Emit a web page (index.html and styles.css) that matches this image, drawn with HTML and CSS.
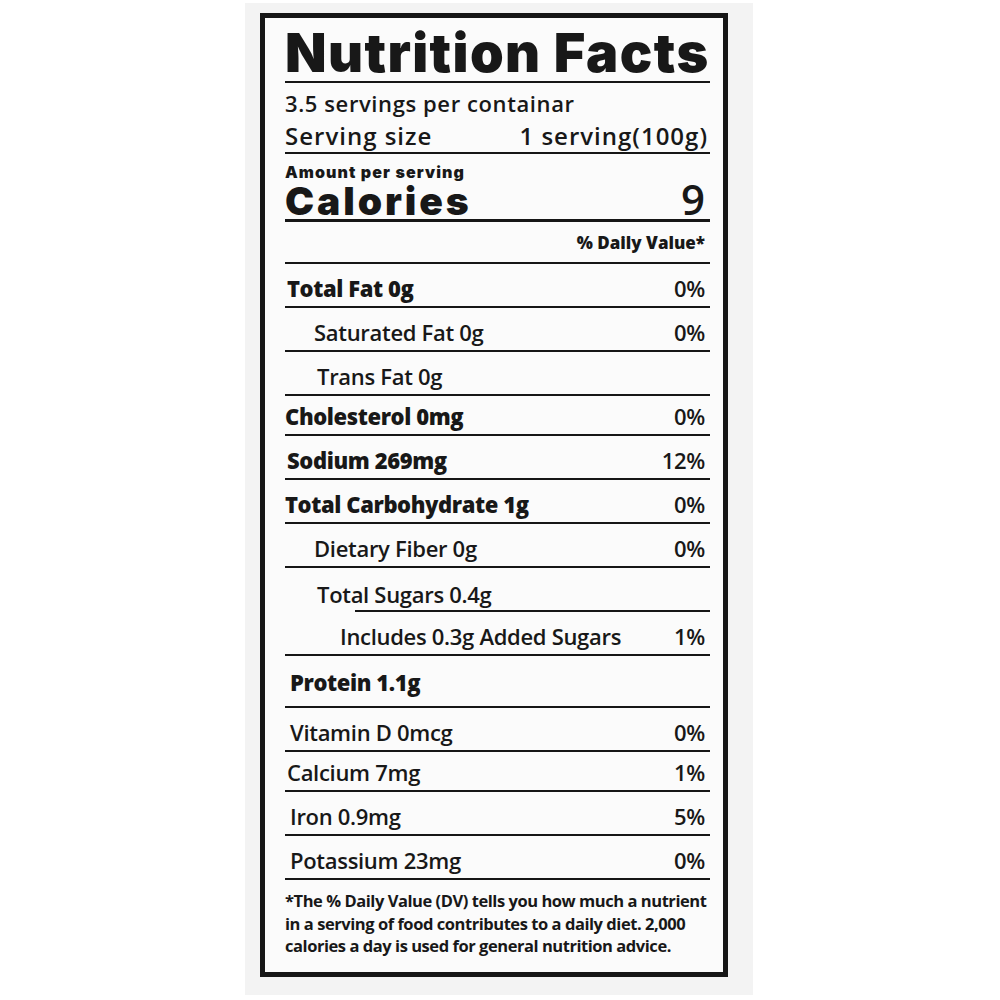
FILE: index.html
```html
<!DOCTYPE html>
<html lang="en">
<head>
<meta charset="utf-8">
<title>Nutrition Facts</title>
<link rel="stylesheet" href="styles.css">
</head>
<body>
<div class="sheet">
  <section class="label">
    <h1 class="title">Nutrition Facts</h1>
    <div class="servings">
      <div class="per-container">3.5 servings per containar</div>
      <div class="serving-size"><span>Serving size</span><span>1 serving(100g)</span></div>
    </div>
    <div class="calories-block">
      <div class="amount">Amount per serving</div>
      <div class="calories-row"><span class="cal-label">Calories</span><span class="cal-value">9</span></div>
    </div>
    <div class="dv-head">% Daily Value*</div>

    <div class="row bold main"><span>Total Fat 0g</span><span class="pct">0%</span></div>
    <div class="row indent"><span>Saturated Fat 0g</span><span class="pct">0%</span></div>
    <div class="row indent wide"><span>Trans Fat 0g</span></div>
    <div class="row bold short"><span>Cholesterol 0mg</span><span class="pct">0%</span></div>
    <div class="row bold main"><span>Sodium 269mg</span><span class="pct">12%</span></div>
    <div class="row bold"><span>Total Carbohydrate 1g</span><span class="pct">0%</span></div>
    <div class="row indent"><span>Dietary Fiber 0g</span><span class="pct">0%</span></div>
    <div class="row indent wide partial"><span>Total Sugars 0.4g</span></div>
    <div class="row indent2"><span>Includes 0.3g Added Sugars</span><span class="pct">1%</span></div>
    <div class="row bold tall main-5"><span>Protein 1.1g</span></div>
    <div class="row main-5"><span>Vitamin D 0mcg</span><span class="pct">0%</span></div>
    <div class="row short main"><span>Calcium 7mg</span><span class="pct">1%</span></div>
    <div class="row main-5"><span>Iron 0.9mg</span><span class="pct">5%</span></div>
    <div class="row main-5"><span>Potassium 23mg</span><span class="pct">0%</span></div>

    <p class="footnote">*The % Daily Value (DV) tells you how much a nutrient<br>in a serving of food contributes to a daily diet. 2,000<br>calories a day is used for general nutrition advice.</p>
  </section>
</div>
</body>
</html>
```

FILE: styles.css
```css
* { box-sizing: border-box; }

html, body {
  margin: 0;
  padding: 0;
  background: #ffffff;
}

body {
  color: #181818;
  font-family: "Open Sans", "Noto Sans", "Liberation Sans", sans-serif;
}

.sheet {
  margin: 3px 0 0 245px;
  width: 508px;
  height: 992px;
  background: #f3f3f3;
  padding: 10px 0 0 15px;
}

.label {
  width: 468px;
  height: 964px;
  border: 5px solid #161616;
  background: #fbfbfb;
  padding: 0 13px 0 20px;
}

.title {
  margin: 0;
  height: 65px;
  line-height: 69px;
  font-family: "Inter", "Liberation Sans", sans-serif;
  font-weight: 900;
  font-size: 54px;
  letter-spacing: 1.4px;
  border-bottom: 2px solid #161616;
  white-space: nowrap;
}

.servings {
  height: 71px;
  padding-top: 5px;
  border-bottom: 2px solid #161616;
  font-weight: 600;
}

.per-container {
  font-size: 22px;
  line-height: 30px;
  letter-spacing: 0.6px;
}

.serving-size {
  margin-top: 3px;
  display: flex;
  justify-content: space-between;
  font-size: 24px;
  line-height: 30px;
  letter-spacing: 1px;
  padding-right: 2px;
}

.calories-block {
  height: 68px;
  padding-top: 9px;
  border-bottom: 3px solid #161616;
}

.amount {
  font-family: "Inter", "Liberation Sans", sans-serif;
  font-weight: 900;
  font-size: 16px;
  line-height: 18px;
  letter-spacing: 1.1px;
}

.calories-row {
  display: flex;
  justify-content: space-between;
  align-items: baseline;
  line-height: 36px;
  padding-right: 5px;
}

.cal-label {
  font-family: "Inter", "Liberation Sans", sans-serif;
  font-weight: 900;
  font-size: 39px;
  letter-spacing: 2.9px;
}

.cal-value {
  font-size: 42px;
  font-weight: 600;
}

.dv-head {
  height: 42px;
  padding-top: 11px;
  padding-right: 5px;
  text-align: right;
  font-weight: 800;
  font-size: 17px;
  line-height: 20px;
  border-bottom: 2px solid #161616;
}

.row {
  height: 44px;
  display: flex;
  justify-content: space-between;
  align-items: flex-end;
  padding-bottom: 6px;
  padding-right: 5px;
  font-size: 22px;
  font-weight: 600;
  letter-spacing: -0.3px;
  line-height: 24px;
  border-bottom: 2px solid #161616;
}

.row.short { height: 40px; }
.row.tall { height: 52px; padding-bottom: 12px; }

.row.bold { font-weight: 800; letter-spacing: -0.4px; }
.row .pct { font-weight: 600; letter-spacing: -0.3px; }
.row.main { padding-left: 2px; }
.row.main-5 { padding-left: 5px; }
.row.indent { padding-left: 29px; }
.row.indent.wide { padding-left: 32px; }
.row.indent2 { padding-left: 55px; }

.row.partial {
  border-bottom: none;
  background: linear-gradient(#161616, #161616) no-repeat right bottom / calc(100% - 70px) 2px;
}

.footnote {
  margin: 0;
  padding-top: 10px;
  font-size: 16.5px;
  line-height: 22.5px;
  font-weight: 700;
  letter-spacing: -0.45px;
  white-space: nowrap;
}
```
